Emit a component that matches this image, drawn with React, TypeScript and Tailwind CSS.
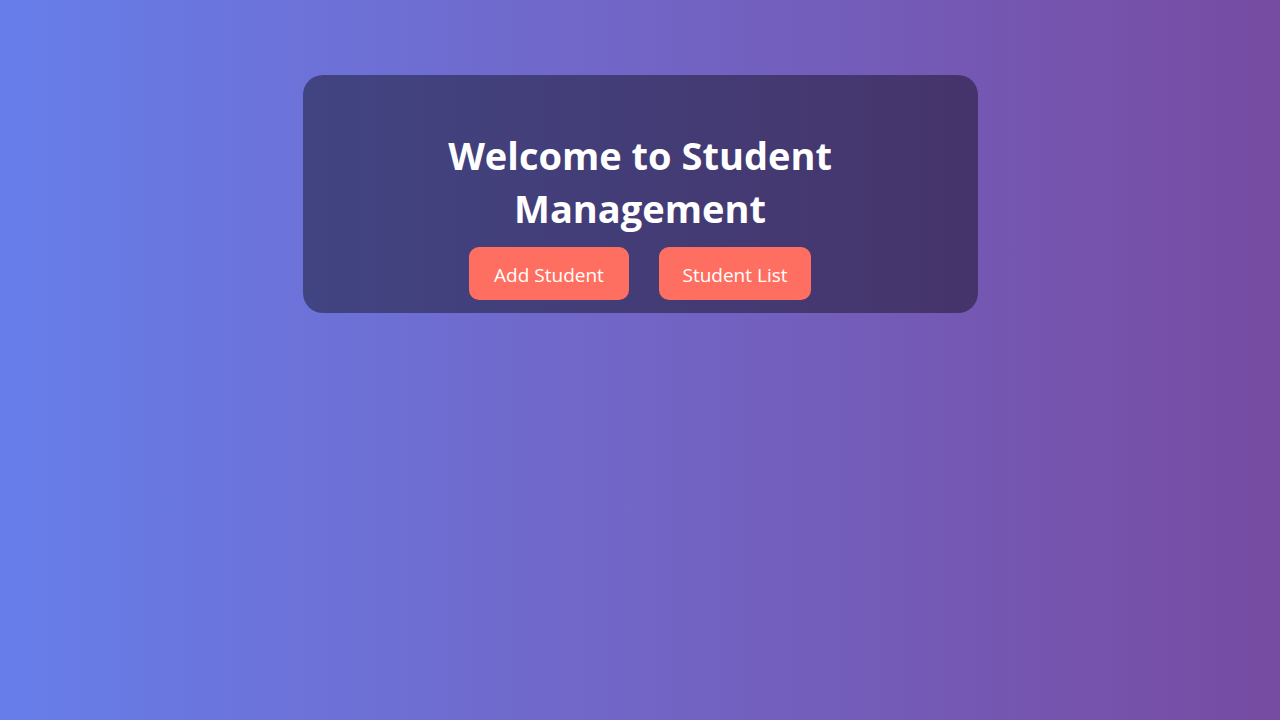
export default function App() {
  return (
    <div
      className="min-h-screen w-full bg-linear-to-r from-[#667eea] to-[#764ba2] pt-[75px]"
      style={{ fontFamily: '"Open Sans", "Noto Sans", sans-serif' }}
    >
      <div className="mx-auto w-[675px] h-[238px] rounded-[20px] bg-black/40 flex flex-col items-center pt-[54px]">
        <h1 className="text-white font-bold text-[38px] leading-[53px] text-center max-w-[420px]">
          Welcome to Student Management
        </h1>
        <div className="flex gap-[30px] mt-[12px]">
          <button className="h-[53px] w-[160px] rounded-[10px] bg-[#ff6f61] text-white text-[19px] pt-[4px]">
            Add Student
          </button>
          <button className="h-[53px] w-[152px] rounded-[10px] bg-[#ff6f61] text-white text-[19px] pt-[4px]">
            Student List
          </button>
        </div>
      </div>
    </div>
  );
}
